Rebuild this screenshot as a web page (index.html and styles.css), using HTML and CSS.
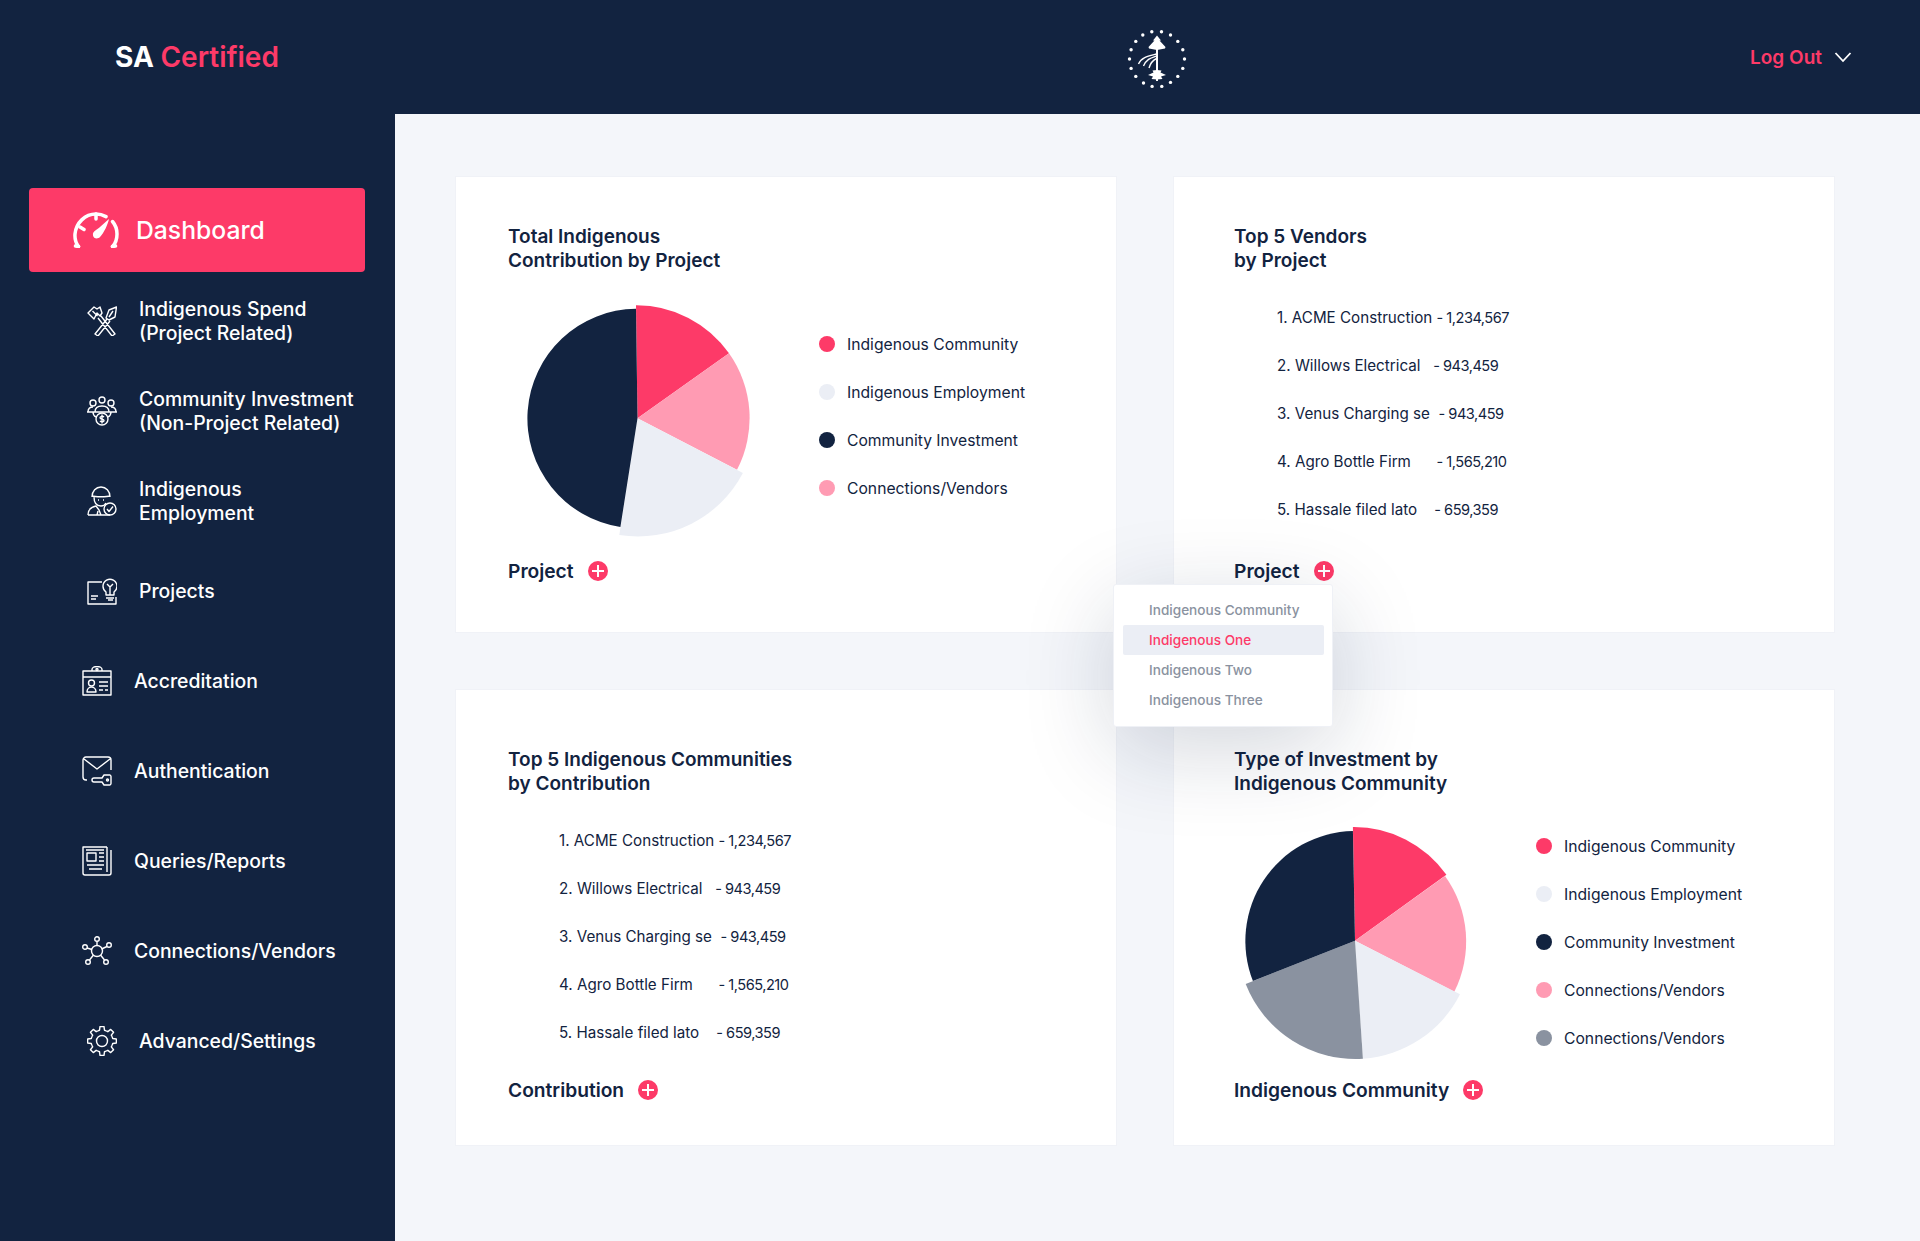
FILE: index.html
```html
<!DOCTYPE html>
<html lang="en">
<head>
<meta charset="utf-8">
<title>SA Certified</title>
<link rel="stylesheet" href="styles.css">
</head>
<body>
<header class="topbar">
  <div class="brand"><span class="brand-sa">SA</span> <span class="brand-cert">Certified</span></div>
  <svg class="crest" viewBox="0 0 60 60" fill="#fff">
    <circle cx="24.800" cy="2.700" r="1.700"/><circle cx="34.500" cy="2.700" r="1.700"/><circle cx="15.800" cy="6" r="1.700"/><circle cx="43.500" cy="6" r="1.700"/><circle cx="8.800" cy="12.400" r="1.700"/><circle cx="50.800" cy="12.400" r="1.700"/><circle cx="4.100" cy="20.700" r="1.700"/><circle cx="55.800" cy="20.700" r="1.700"/><circle cx="2.500" cy="30" r="1.700"/><circle cx="57.500" cy="30" r="1.700"/><circle cx="4.100" cy="39.400" r="1.700"/><circle cx="55.800" cy="39.400" r="1.700"/><circle cx="8.800" cy="47.400" r="1.700"/><circle cx="50.800" cy="47.400" r="1.700"/><circle cx="16.500" cy="54" r="1.700"/><circle cx="43.500" cy="53.400" r="1.700"/><circle cx="25.100" cy="57.400" r="1.700"/><circle cx="34.800" cy="57.400" r="1.700"/>
    <path d="M30 6.500l4 5h-1.500l6 6.500-.5 1.500-8 1.500-8-1.500-.5-1.500 6-6.500h-1.500z"/>
    <rect x="29" y="18" width="2" height="34"/>
    <path d="M30 41l4.500.5-1 2 5.500 2.500-5 1.500 1.500 2.500-5.500.5-5.500-.5 1.500-2.500-5-1.500 5.500-2.500-1-2z"/>
    <path d="M29.500 25c-8 2-15 3-18 10M29.500 27c-6 2-10 3-13 10M29.500 29.500c-4 2-6 4-7.500 9.500" fill="none" stroke="#fff" stroke-width="1.400"/>
  </svg>
  <div class="logout"><span>Log Out</span>
    <svg class="chevron" viewBox="0 0 18 12"><path d="M1.500 2l7.500 8 7.500-8"/></svg>
  </div>
</header>
<div class="shell">
  <aside class="sidebar">
    <a class="nav-active">
      <svg class="gauge" viewBox="0 0 46 36">
        <path d="M5.500 34.500C2.500 30.500 1.700 26 2 22 3 11 12 2 23 2c4 0 7 1 10 2.600M39.500 9.500C42.500 13 44 17.500 44 22c0 4.500-1 9-4.500 12.500"/>
        <path d="M23 2v5M7 15l4 2.500M5.500 34.500l-3-.5M39.500 34.500l3-.5"/>
        <path class="gauge-needle" d="M36 7c-1 5-5 14-9 18-2.500 2.500-6.500 1.500-7-1.500-.5-2.500.5-4 3-5.500 4-2.500 9-8 13-11z"/>
      </svg>
      <span>Dashboard</span>
    </a>
    <a class="nav-item">
      <svg class="icon" viewBox="0 0 30 30"><path d="M1 7L7 1l3 2 3-2 2 6-2 3-3-3-3 6zM5.500 5l5 5M11 12l14 18 3-2L14 10M29.500 1L22 4l-3 8 3 2 6-3zM20 13L8 28l3 2 12-15M26 5l-4 6"/></svg>
      <span>Indigenous Spend<br>(Project Related)</span>
    </a>
    <a class="nav-item">
      <svg class="icon" viewBox="0 0 30 30"><circle cx="15" cy="4" r="3"/><circle cx="6" cy="7" r="3"/><circle cx="24" cy="7" r="3"/><path d="M1 16c0-3 2-5 5-5M29 16c0-3-2-5-5-5M8 16c0-4 3-6 7-6s7 2 7 6M0 16h30M6 16c0 2 1 4 3 5M24 16c0 2-1 4-3 5"/><circle cx="15" cy="23" r="6"/><path d="M17 21c-1-1-4-1-4 .8s4 1 4 2.800-3 1.400-4 .4M15 18.500v9"/></svg>
      <span>Community Investment<br>(Non-Project Related)</span>
    </a>
    <a class="nav-item">
      <svg class="icon" viewBox="0 0 30 30"><path d="M5 11C5 5 9 1 14 1s9 4 9 10M5 10c3 1 15 1 18 0M7 11c0 6 3 9 7 9 2 0 4-1 5-3M11 14h1M16 14h1M1 29c0-6 3-8 8-9l3 4 2 5M1 29h22M10 29l1-4"/><circle cx="23" cy="23" r="6"/><path d="M20 23l2 2.500 4-5"/></svg>
      <span>Indigenous<br>Employment</span>
    </a>
    <a class="nav-item">
      <svg class="icon" viewBox="0 0 30 30"><path d="M15 6H1v22h28v-7M4 20h7M4 23h5M21 24h5"/><path d="M16 10a7 7 0 1 1 11 6v3h-8v-3a7 7 0 0 1-3-6zM19 22h8M23 19V11l-3-3M23 11l3-3"/></svg>
      <span>Projects</span>
    </a>
    <a class="nav-item nav-shift">
      <svg class="icon" viewBox="0 0 30 30"><path d="M1 5h28v24H1zM1 11h28M10 5V3.500a5 3 0 0 1 10 0V5"/><circle cx="15" cy="3.500" r="1"/><circle cx="9.500" cy="17" r="3"/><path d="M5 26c0-3 2-5 4.500-5s4.500 2 4.500 5zM17 16h9M17 20h9M17 24h4M23 24h3"/></svg>
      <span>Accreditation</span>
    </a>
    <a class="nav-item nav-shift">
      <svg class="icon" viewBox="0 0 30 30"><path d="M1 21V4a3 3 0 0 1 3-3h22a3 3 0 0 1 3 3v10M2 3l13 10 13-10M1 21a3 3 0 0 0 3 3h1"/><path d="M10 24a2 2 0 0 1 2-2h8l2-3h6a2 2 0 0 1 1 1.500v7a2 2 0 0 1-1 1.500h-6l-2-3h-8a2 2 0 0 1-2-2z"/><circle cx="25.500" cy="24" r="1"/></svg>
      <span>Authentication</span>
    </a>
    <a class="nav-item nav-shift">
      <svg class="icon" viewBox="0 0 30 30"><path d="M25 1H1v26a2 2 0 0 0 2 2h24a2 2 0 0 0 2-2V4M25 1v25M4 4h18M5 7h9v8H5zM17 7h5M17 11h5M17 15h5M5 19h17M7 23h13"/></svg>
      <span>Queries/Reports</span>
    </a>
    <a class="nav-item nav-shift">
      <svg class="icon" viewBox="0 0 30 30"><circle cx="15" cy="15" r="5.500"/><circle cx="15" cy="3" r="2.300"/><circle cx="3" cy="11" r="2.300"/><circle cx="27" cy="9" r="2.300"/><circle cx="6" cy="26" r="2.300"/><circle cx="24" cy="26" r="2.300"/><path d="M15 5.300V9.500M5 12l5 1.500M25 10.500l-5.500 2.500M7.500 24l4-5M22.500 24l-4-5"/></svg>
      <span>Connections/Vendors</span>
    </a>
    <a class="nav-item">
      <svg class="icon" viewBox="0 0 30 30">
        <defs><path id="tooth" d="M10.790 4.840L12.530 4.280 12.980.64H17.020L17.470 4.280 19.210 4.840"/></defs>
        <circle cx="15" cy="15" r="5.500"/>
        <use href="#tooth"/><use href="#tooth" transform="rotate(45 15 15)"/><use href="#tooth" transform="rotate(90 15 15)"/><use href="#tooth" transform="rotate(135 15 15)"/><use href="#tooth" transform="rotate(180 15 15)"/><use href="#tooth" transform="rotate(225 15 15)"/><use href="#tooth" transform="rotate(270 15 15)"/><use href="#tooth" transform="rotate(315 15 15)"/>
      </svg>
      <span>Advanced/Settings</span>
    </a>
  </aside>

  <main class="content">
    <section class="card card-top card-chart">
      <h2 class="card-title">Total Indigenous<br>Contribution by Project</h2>
      <div class="chart-row">
        <svg class="pie" viewBox="508 300 311 240">
          <path fill="#fd3a68" d="M637.500 417.300L636 304.300A113 113 0 0 1 729 352.300z"/>
          <path fill="#ff9bb3" d="M637.500 417.300L729 352.300A112 112 0 0 1 737 468.700z"/>
          <path fill="#ebeef5" d="M637.500 417.300L742.900 472A118.500 118.500 0 0 1 619.300 534z"/>
          <path fill="#122340" d="M637.500 417.300L620.400 526A109.800 109.800 0 0 1 636 307.700z"/>
        </svg>
        <ul class="legend">
          <li><i class="dot dot-red"></i>Indigenous Community</li>
          <li><i class="dot dot-light"></i>Indigenous Employment</li>
          <li><i class="dot dot-navy"></i>Community Investment</li>
          <li><i class="dot dot-pink"></i>Connections/Vendors</li>
        </ul>
      </div>
      <div class="filter"><span>Project</span><i class="plus"></i></div>
    </section>

    <section class="card card-top card-list">
      <h2 class="card-title">Top 5 Vendors<br>by Project</h2>
      <ol class="rank">
        <li>1. ACME Construction <span class="val">- 1,234,567</span></li>
        <li>2. Willows Electrical   <span class="val">- 943,459</span></li>
        <li>3. Venus Charging se  <span class="val">- 943,459</span></li>
        <li>4. Agro Bottle Firm      <span class="val">- 1,565,210</span></li>
        <li>5. Hassale filed lato    <span class="val">- 659,359</span></li>
      </ol>
      <div class="filter"><span>Project</span><i class="plus"></i></div>
    </section>

    <section class="card card-bottom card-chart">
      <h2 class="card-title">Top 5 Indigenous Communities<br>by Contribution</h2>
      <ol class="rank rank-deep">
        <li>1. ACME Construction <span class="val">- 1,234,567</span></li>
        <li>2. Willows Electrical   <span class="val">- 943,459</span></li>
        <li>3. Venus Charging se  <span class="val">- 943,459</span></li>
        <li>4. Agro Bottle Firm      <span class="val">- 1,565,210</span></li>
        <li>5. Hassale filed lato    <span class="val">- 659,359</span></li>
      </ol>
      <div class="filter"><span>Contribution</span><i class="plus"></i></div>
    </section>

    <section class="card card-bottom card-list">
      <h2 class="card-title">Type of Investment by<br>Indigenous Community</h2>
      <div class="chart-row">
        <svg class="pie pie-wide" viewBox="1234 820 302 244">
          <path fill="#fd3a68" d="M1355 940.700L1352.900 827A113.500 113.500 0 0 1 1446.400 874.700z"/>
          <path fill="#ff9bb3" d="M1355 940.700L1445 876A112 112 0 0 1 1454.300 991.700z"/>
          <path fill="#ebeef5" d="M1355 940.700L1460 994.300A118 118 0 0 1 1362.900 1058.700z"/>
          <path fill="#8a92a0" d="M1355 940.700L1362.900 1058.700A118 118 0 0 1 1245.700 984z"/>
          <path fill="#122340" d="M1355 940.700L1252.900 981A110 110 0 0 1 1352.900 831z"/>
        </svg>
        <ul class="legend legend-high">
          <li><i class="dot dot-red"></i>Indigenous Community</li>
          <li><i class="dot dot-light"></i>Indigenous Employment</li>
          <li><i class="dot dot-navy"></i>Community Investment</li>
          <li><i class="dot dot-pink"></i>Connections/Vendors</li>
          <li><i class="dot dot-grey"></i>Connections/Vendors</li>
        </ul>
      </div>
      <div class="filter"><span>Indigenous Community</span><i class="plus"></i></div>
    </section>

    <div class="dropdown">
      <div class="drop-item">Indigenous Community</div>
      <div class="drop-item drop-on">Indigenous One</div>
      <div class="drop-item">Indigenous Two</div>
      <div class="drop-item">Indigenous Three</div>
    </div>
  </main>
</div>
</body>
</html>
```
FILE: styles.css
```css
* { box-sizing: border-box; }
html, body { margin: 0; padding: 0; }
body {
  width: 1920px;
  height: 1241px;
  overflow: hidden;
  background: #f4f6fa;
  font-family: Inter, "Liberation Sans", sans-serif;
  color: #122340;
}
.topbar {
  height: 114px;
  background: #122340;
  display: grid;
  grid-template-columns: 1012px auto 1fr;
  align-items: center;
  padding: 0 68px 0 115px;
}
.brand { font-size: 28px; font-weight: 700; }
.brand-sa { color: #fff; }
.brand-cert { color: #fd3a68; font-weight: 600; }
.crest { width: 60px; height: 60px; display: block; margin-top: 3px; }
.logout {
  justify-self: end;
  display: flex;
  align-items: center;
  gap: 12px;
  color: #fd3a68;
  font-size: 19px;
  font-weight: 600;
}
.chevron { width: 18px; height: 12px; fill: none; stroke: #fff; stroke-width: 1.800; }

.shell { display: flex; height: 1127px; }
.sidebar {
  width: 395px;
  flex: none;
  background: #122340;
  padding: 74px 30px 0 29px;
  color: #fff;
}
.nav-active {
  display: flex;
  align-items: center;
  gap: 17px;
  height: 84px;
  margin-bottom: 3.600px;
  padding-left: 44px;
  background: #fd3a68;
  border-radius: 4px;
  font-size: 24.700px;
  font-weight: 500;
}
.gauge { width: 46px; height: 36px; fill: none; stroke: #fff; stroke-width: 3.500; stroke-linecap: round; }
.gauge-needle { fill: #fff; stroke: none; }
.nav-item {
  display: flex;
  align-items: center;
  gap: 22px;
  height: 90px;
  padding-left: 58px;
  font-size: 19.400px;
  font-weight: 500;
  line-height: 24px;
}
.nav-shift { padding-left: 53px; }
.icon { width: 30px; height: 30px; flex: none; fill: none; stroke: #fff; stroke-width: 1.400; stroke-linejoin: round; }

.content {
  position: relative;
  flex: 1;
  display: grid;
  grid-template-columns: 662px 662px;
  grid-template-rows: 457px 457px;
  gap: 56px;
  padding: 62px 0 0 60px;
}
.card {
  background: #fff;
  border: 1px solid #f0f2f7;
  display: flex;
  flex-direction: column;
}
.card-chart { padding-left: 52px; }
.card-list { padding-left: 60px; }
.card-top { padding-top: 48px; }
.card-bottom { padding-top: 58px; }
.card-title {
  margin: 0;
  font-size: 19px;
  font-weight: 600;
  line-height: 24px;
}
.chart-row { display: flex; align-items: flex-start; margin-top: 28px; height: 240px; }
.pie { width: 311px; height: 240px; flex: none; }
.pie-wide { width: 302px; height: 244px; margin-top: -4px; }
.legend { list-style: none; flex: none; margin: 31px 0 0; padding: 0; display: flex; flex-direction: column; gap: 24px; }
.legend-high { margin-top: 10px; }
.legend li { display: flex; align-items: center; gap: 12px; height: 24px; font-size: 15.700px; white-space: nowrap; }
.dot { width: 16px; height: 16px; border-radius: 50%; flex: none; }
.dot-red { background: #fd3a68; }
.dot-light { background: #ebeef5; }
.dot-navy { background: #122340; }
.dot-pink { background: #ff9bb3; }
.dot-grey { background: #8a92a0; }
.filter {
  display: flex;
  align-items: center;
  gap: 14px;
  margin-top: auto;
  margin-bottom: 49px;
  height: 24px;
  font-size: 19.200px;
  font-weight: 600;
}
.card-bottom .filter { margin-bottom: 43px; }
.plus {
  position: relative;
  width: 20px;
  height: 20px;
  border-radius: 50%;
  background: #fd3a68;
}
.plus::before, .plus::after {
  content: "";
  position: absolute;
  background: #fff;
  left: 4px;
  top: 9px;
  width: 12px;
  height: 2px;
}
.plus::after { left: 9px; top: 4px; width: 2px; height: 12px; }
.rank {
  list-style: none;
  margin: 33px 0 0;
  padding: 0 0 0 43px;
  display: flex;
  flex-direction: column;
  gap: 24px;
}
.rank-deep { padding-left: 51px; }
.rank li { height: 24px; line-height: 24px; font-size: 15.200px; white-space: pre; }
.val { font-size: 14.600px; letter-spacing: -0.5px; }
.dropdown {
  position: absolute;
  left: 718px;
  top: 470px;
  width: 220px;
  height: 143px;
  background: #fff;
  border: 1px solid #eff1f6;
  border-radius: 3px;
  padding: 10px 8px 10px 9px;
  box-shadow: 0 22px 90px rgba(18, 35, 64, 0.18);
}
.drop-item {
  height: 30px;
  line-height: 30px;
  padding-left: 26px;
  font-size: 13.600px;
  font-weight: 500;
  color: #8a92a0;
  border-radius: 2px;
}
.drop-on { background: #ebeef5; color: #fd3a68; }
```
